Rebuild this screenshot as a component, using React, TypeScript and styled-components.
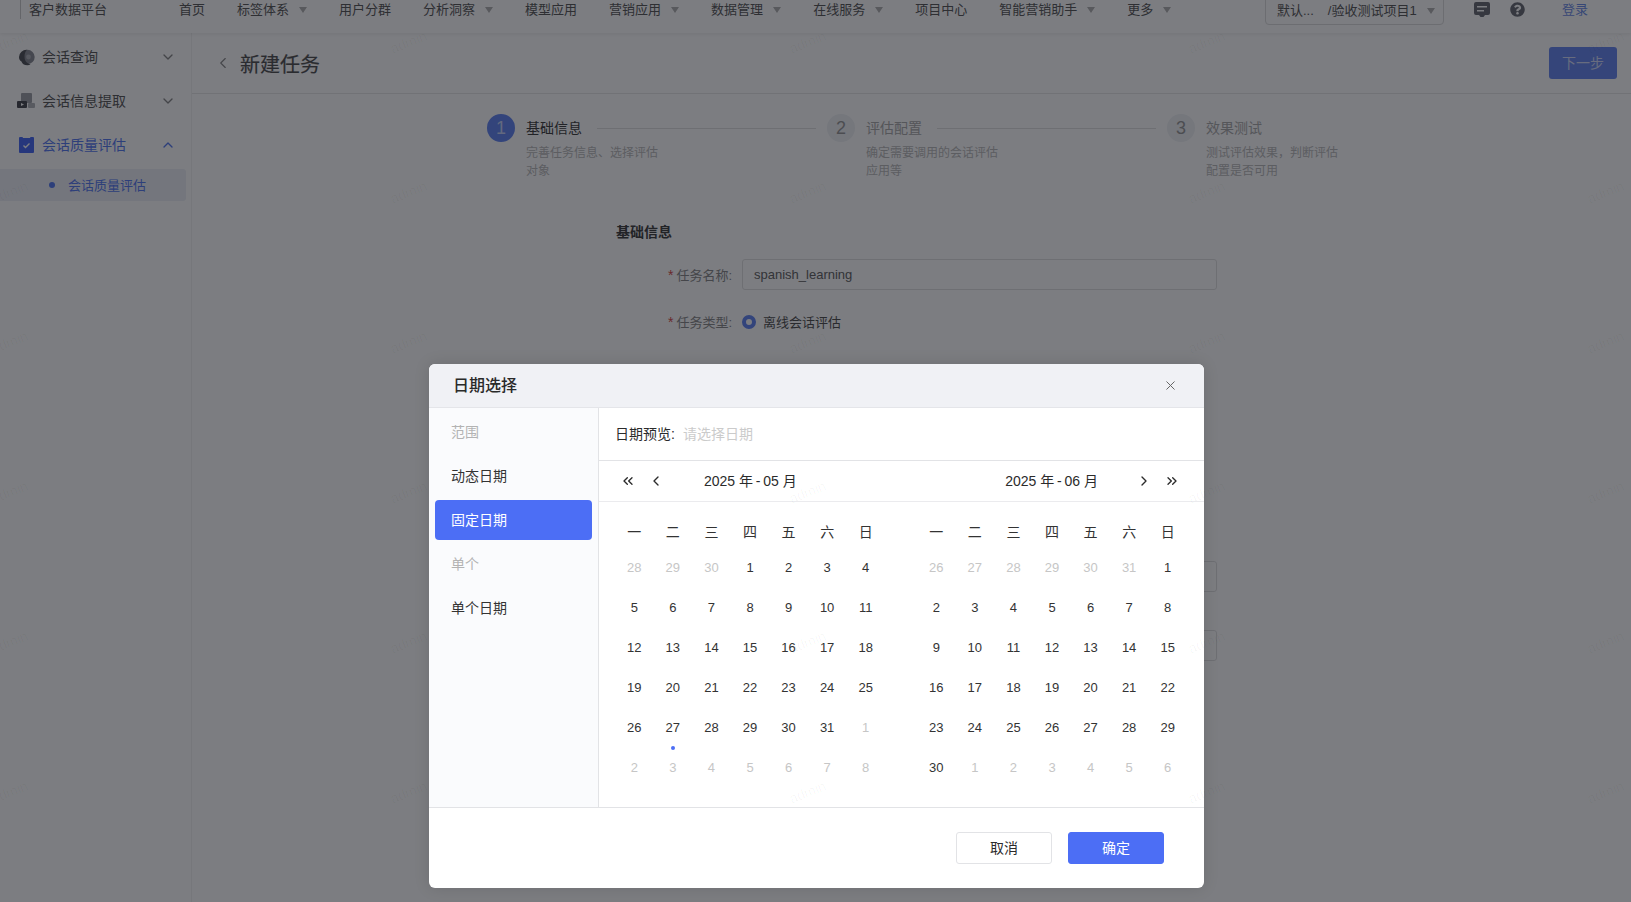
import React from "react";
import styled, { createGlobalStyle } from "styled-components";
import { ChevronDown, ChevronUp, ChevronLeft, ChevronRight, ChevronsLeft, ChevronsRight, X } from "lucide-react";
import { FaQuestionCircle } from "react-icons/fa";

const Global = createGlobalStyle`
  html, body { margin: 0; padding: 0; background: #fff; }
  body { font-family: "Liberation Sans", "Noto Sans CJK SC", sans-serif; color: #555; overflow: hidden; }
  * { box-sizing: border-box; }
`;

const Root = styled.div`
  position: relative;
  width: 1631px;
  height: 902px;
  overflow: hidden;
  background: #fff;
`;

const TopNav = styled.header`
  display: flex;
  align-items: flex-start;
  height: 33px;
  padding: 0 43px 0 20px;
  font-size: 13px;
  line-height: 19px;
  color: #5c5c5c;
  box-shadow: 0 1px 4px rgba(0, 0, 0, 0.08);
  position: relative;
`;
const Brand = styled.div`
  border-left: 1px solid #ccc;
  padding-left: 8px;
  height: 19px;
  margin-right: 72px;
  white-space: nowrap;
`;
const NavList = styled.nav`
  display: flex;
  gap: 32px;
`;
const NavItem = styled.span`
  display: flex;
  align-items: center;
  white-space: nowrap;
`;
const Caret = styled.i`
  width: 0;
  height: 0;
  margin-left: 10px;
  border-left: 4px solid transparent;
  border-right: 4px solid transparent;
  border-top: 6px solid #b4b4b4;
`;
const NavRight = styled.div`
  margin-left: auto;
  display: flex;
  align-items: flex-start;
`;
const ProjectSelect = styled.div`
  width: 179px;
  height: 33px;
  margin-top: -8px;
  padding: 4px 12px 0 11px;
  border: 1px solid #ddd;
  border-radius: 4px;
  display: flex;
  align-items: center;
  justify-content: space-between;
  white-space: pre;
`;
const SelectGap = styled.span`
  display: inline-block;
  width: 14px;
`;
const IconBtn = styled.span`
  display: flex;
  color: #6d7078;
  margin-top: 2px;
`;
const MsgIcon = styled(IconBtn)`
  margin-left: 30px;
`;
const HelpIcon = styled(IconBtn)`
  margin-left: 20px;
`;
const Login = styled.span`
  margin-left: 37px;
  color: #6f8fe8;
  font-size: 13px;
`;

const Body = styled.div`
  display: flex;
  height: 869px;
`;
const Side = styled.aside`
  width: 192px;
  flex: none;
  padding-top: 2px;
  border-right: 1px solid #f2f2f2;
  font-size: 14px;
`;
const SideItem = styled.div<{ $active?: boolean }>`
  display: flex;
  align-items: center;
  height: 44px;
  padding: 0 15px 0 17px;
  color: ${(p) => (p.$active ? "#5b7df0" : "#5c5c5c")};
  > svg:last-child { margin-left: auto; color: ${(p) => (p.$active ? "#5b7df0" : "#8a8a8a")}; }
`;
const SideIcon = styled.span`
  width: 18px;
  height: 18px;
  margin-right: 7px;
  display: flex;
  align-items: center;
  justify-content: center;
`;
const SideLabel = styled.span`
  padding-bottom: 2px;
`;
const SubItem = styled.div`
  width: 186px;
  height: 32px;
  margin-top: 2px;
  padding-left: 49px;
  display: flex;
  align-items: center;
  gap: 13px;
  font-size: 13px;
  color: #5b7df0;
  background: #eef1f6;
  border-radius: 0 3px 3px 0;
`;
const Bullet = styled.i`
  width: 6px;
  height: 6px;
  border-radius: 50%;
  background: #5b7df0;
`;

const Main = styled.main`
  flex: 1;
  min-width: 0;
`;
const PageHead = styled.div`
  height: 61px;
  display: flex;
  align-items: center;
  padding: 0 14px 0 22px;
  border-bottom: 1px solid #e9e9e9;
  color: #8c8c8c;
`;
const PageTitle = styled.h1`
  margin: 0 0 0 8px;
  font-size: 20px;
  font-weight: 400;
  color: #555;
  -webkit-text-stroke: 0.2px #555;
`;
const NextBtn = styled.button`
  margin-left: auto;
  width: 68px;
  height: 32px;
  padding: 0 0 2px;
  font: inherit;
  font-size: 14px;
  color: #d3dcfa;
  background: #6c8bf0;
  border: 0;
  border-radius: 3px;
`;

const Stepper = styled.div`
  display: flex;
  margin: 20px 0 0 295px;
`;
const Step = styled.div`
  width: 340px;
  flex: none;
  display: flex;
  padding-right: 11px;
`;
const StepNum = styled.div<{ $on?: boolean }>`
  width: 28px;
  height: 28px;
  flex: none;
  border-radius: 50%;
  display: flex;
  align-items: center;
  justify-content: center;
  font-size: 18px;
  margin-right: 11px;
  color: ${(p) => (p.$on ? "#c8d4fb" : "#9c9c9c")};
  background: ${(p) => (p.$on ? "#6688f2" : "#f0f2f5")};
`;
const StepBody = styled.div`
  flex: 1;
  min-width: 0;
`;
const StepHead = styled.div<{ $on?: boolean }>`
  height: 28px;
  display: flex;
  align-items: center;
  font-size: 14px;
  white-space: nowrap;
  color: ${(p) => (p.$on ? "#444" : "#adadad")};
`;
const StepTitle = styled.span`
  padding-bottom: 2px;
`;
const StepLine = styled.i`
  flex: 1;
  height: 1px;
  margin-left: 15px;
  background: #e2e2e2;
`;
const StepDesc = styled.div`
  width: 135px;
  margin-top: 2px;
  font-size: 12px;
  line-height: 18px;
  color: #bcbcbc;
`;

const Form = styled.section`
  margin: 42px 0 0 424px;
`;
const FormTitle = styled.h2`
  margin: 0;
  font-size: 14px;
  font-weight: 700;
  line-height: 20px;
  color: #444;
`;
const Row = styled.div<{ $gap: number }>`
  display: flex;
  align-items: center;
  margin-top: ${(p) => p.$gap}px;
  font-size: 13px;
`;
const Label = styled.label`
  width: 116px;
  flex: none;
  margin-right: 10px;
  text-align: right;
  color: #8c8c8c;
  &::before {
    content: "*";
    font-size: 14px;
    color: #d9534f;
    margin-right: 3px;
  }
`;
const Field = styled.div`
  width: 475px;
  height: 31px;
  padding-left: 11px;
  border: 1px solid #e2e2e2;
  border-radius: 3px;
  line-height: 29px;
  color: #666;
`;
const Radio = styled.i`
  width: 14px;
  height: 14px;
  margin-right: 7px;
  border-radius: 50%;
  border: 4px solid #6688f2;
  background: #fff;
`;

const Overlay = styled.div`
  position: absolute;
  inset: 0;
  background: rgba(3, 5, 13, 0.52);
`;
const Modal = styled.div`
  position: absolute;
  left: 429px;
  top: 364px;
  width: 775px;
  height: 524px;
  display: flex;
  flex-direction: column;
  background: #fff;
  border-radius: 6px;
  overflow: hidden;
  box-shadow: 0 0 16px rgba(0, 0, 0, 0.12);
  color: #2b2b2b;
`;
const ModalHead = styled.div`
  height: 44px;
  flex: none;
  display: flex;
  align-items: center;
  justify-content: space-between;
  padding: 0 26px 0 24px;
  background: #f0f1f5;
  border-bottom: 1px solid #e4e5e9;
  font-size: 16px;
  font-weight: 500;
  color: #2a2a2a;
  > svg { color: #666; }
`;
const ModalTitle = styled.span`
  padding-bottom: 4px;
`;
const ModalBody = styled.div`
  flex: 1;
  display: flex;
  min-height: 0;
`;
const Menu = styled.div`
  width: 170px;
  flex: none;
  display: flex;
  flex-direction: column;
  padding: 2px 6px 0;
  background: #fafbfd;
  border-right: 1px solid #e2e3e6;
`;
const MenuGroup = styled.div`
  height: 44px;
  flex: none;
  padding: 0 16px 2px;
  display: flex;
  align-items: center;
  font-size: 14px;
  color: #b3b3b3;
`;
const MenuItem = styled.div<{ $active?: boolean }>`
  height: 40px;
  flex: none;
  margin: 2px 0;
  padding: 0 16px 2px;
  display: flex;
  align-items: center;
  font-size: 14px;
  border-radius: 4px;
  color: ${(p) => (p.$active ? "#fff" : "#333")};
  background: ${(p) => (p.$active ? "#4c6ef5" : "transparent")};
`;
const CalPane = styled.div`
  flex: 1;
  min-width: 0;
  display: flex;
  flex-direction: column;
`;
const Preview = styled.div`
  height: 53px;
  flex: none;
  display: flex;
  align-items: center;
  padding: 0 0 2px 16px;
  font-size: 14px;
  border-bottom: 1px solid #e2e3e6;
`;
const Placeholder = styled.span`
  margin-left: 8px;
  color: #cbcbcb;
`;
const CalBar = styled.div`
  height: 41px;
  flex: none;
  display: flex;
  align-items: center;
  font-size: 14px;
  border-bottom: 1px solid #ebebee;
`;
const BarIcon = styled.span<{ $edge?: "left" | "right" }>`
  width: 28px;
  flex: none;
  display: flex;
  justify-content: center;
  color: #2b2b2b;
  margin-left: ${(p) => (p.$edge === "left" ? "15px" : "0")};
  margin-right: ${(p) => (p.$edge === "right" ? "18px" : "0")};
`;
const LeftTitle = styled.span`
  margin-left: 34px;
  padding-bottom: 2px;
  white-space: pre;
`;
const RightTitle = styled.span`
  margin-left: auto;
  margin-right: 32px;
  padding-bottom: 2px;
  white-space: pre;
`;
const Calendars = styled.div`
  display: flex;
  gap: 32px;
  padding: 15px 0 0 16px;
`;
const Grid = styled.div`
  width: 270px;
  display: grid;
  grid-template-columns: repeat(7, 1fr);
  grid-template-rows: 30px;
  grid-auto-rows: 40px;
  align-content: start;
`;
const WeekHead = styled.div`
  display: flex;
  align-items: center;
  justify-content: center;
  padding-bottom: 2px;
  font-size: 14px;
  color: #333;
`;
const Day = styled.div<{ $off?: boolean }>`
  position: relative;
  display: flex;
  align-items: center;
  justify-content: center;
  font-size: 13px;
  color: ${(p) => (p.$off ? "#c6c6c6" : "#333")};
`;
const Today = styled.i`
  position: absolute;
  left: 50%;
  top: 39px;
  width: 4px;
  height: 4px;
  margin-left: -2px;
  border-radius: 50%;
  background: #4c6ef5;
`;
const ModalFoot = styled.div`
  height: 81px;
  flex: none;
  display: flex;
  justify-content: flex-end;
  gap: 16px;
  padding: 24px 40px 0 0;
  border-top: 1px solid #e2e3e6;
`;
const FootBtn = styled.button<{ $primary?: boolean }>`
  width: 96px;
  height: 32px;
  padding: 0 0 2px;
  font: inherit;
  font-size: 14px;
  border-radius: 3px;
  border: 1px solid ${(p) => (p.$primary ? "#4c6ef5" : "#e2e3e6")};
  background: ${(p) => (p.$primary ? "#4c6ef5" : "#fff")};
  color: ${(p) => (p.$primary ? "#fff" : "#2b2b2b")};
`;

const Watermarks = styled.div`
  position: absolute;
  left: -190px;
  top: -33px;
  display: grid;
  grid-template-columns: repeat(5, 399px);
  grid-auto-rows: 150px;
  pointer-events: none;
`;
const Mark = styled.span`
  display: flex;
  align-items: center;
  justify-content: center;
  font-size: 14px;
  color: rgba(0, 0, 0, 0.035);
  transform: rotate(-22deg);
`;

const navItems: [string, boolean][] = [
  ["首页", false], ["标签体系", true], ["用户分群", false], ["分析洞察", true], ["模型应用", false],
  ["营销应用", true], ["数据管理", true], ["在线服务", true], ["项目中心", false], ["智能营销助手", true], ["更多", true],
];
const weekDays = ["一", "二", "三", "四", "五", "六", "日"];

type Cell = { n: number; off?: boolean; today?: boolean };
const seq = (from: number, to: number, off = false): Cell[] =>
  Array.from({ length: to - from + 1 }, (_, i) => ({ n: from + i, off }));
const may: Cell[] = [...seq(28, 30, true), ...seq(1, 31), ...seq(1, 8, true)].map((c, i) =>
  i === 29 ? { ...c, today: true } : c,
);
const june: Cell[] = [...seq(26, 31, true), ...seq(1, 30), ...seq(1, 6, true)];

const steps = [
  { n: 1, t: "基础信息", d: "完善任务信息、选择评估对象", on: true, line: true },
  { n: 2, t: "评估配置", d: "确定需要调用的会话评估应用等", on: false, line: true },
  { n: 3, t: "效果测试", d: "测试评估效果，判断评估配置是否可用", on: false, line: false },
];

const Month = ({ cells }: { cells: Cell[] }) => (
  <Grid>
    {weekDays.map((w) => (
      <WeekHead key={w}>{w}</WeekHead>
    ))}
    {cells.map((c, i) => (
      <Day key={i} $off={c.off}>
        {c.n}
        {c.today && <Today />}
      </Day>
    ))}
  </Grid>
);

export default function App() {
  return (
    <Root>
      <Global />
      <TopNav>
        <Brand>客户数据平台</Brand>
        <NavList>
          {navItems.map(([label, caret]) => (
            <NavItem key={label}>
              {label}
              {caret && <Caret />}
            </NavItem>
          ))}
        </NavList>
        <NavRight>
          <ProjectSelect>
            <span>
              默认...
              <SelectGap />
              /验收测试项目1
            </span>
            <Caret />
          </ProjectSelect>
          <MsgIcon>
            <svg width="16" height="15" viewBox="0 0 16 15">
              <path fill="currentColor" d="M2 0h12a2 2 0 0 1 2 2v9a2 2 0 0 1-2 2h-3l-1.5 2h-3L5 13H2a2 2 0 0 1-2-2V2a2 2 0 0 1 2-2z" />
              <path fill="#fff" d="M3 4h10v1.5H3zM3 8h7v1.5H3z" />
            </svg>
          </MsgIcon>
          <HelpIcon>
            <FaQuestionCircle size={15} />
          </HelpIcon>
          <Login>登录</Login>
        </NavRight>
      </TopNav>
      <Body>
        <Side>
          <SideItem>
            <SideIcon>
              <svg width="17" height="17" viewBox="0 0 17 17">
                <circle cx="9.5" cy="8" r="7.2" fill="#8d8f96" />
                <path fill="#55575c" d="M9 .8A7.5 7.5 0 0 0 1 8c0 2 .8 3.5 2.5 4.6.6 2.4 2.5 3.6 6 3.6 1.2 0 2.3-.2 3-.6-3-1-6-3-6-8 0-3 1-5.5 2.500-6.800z" />
                <circle cx="10.5" cy="8" r="2.4" fill="#b0b2b8" />
              </svg>
            </SideIcon>
            <SideLabel>会话查询</SideLabel>
            <ChevronDown size={16} />
          </SideItem>
          <SideItem>
            <SideIcon>
              <svg width="18" height="16" viewBox="0 0 18 16">
                <rect x="4" y="0" width="11" height="10" rx="1" fill="#a2a4aa" />
                <rect x="0" y="8" width="10" height="7" rx="1" fill="#4c4e54" />
                <path d="M4 10l3 1.500L4 13z" fill="#fff" />
                <rect x="11" y="10" width="7" height="5" rx="1" fill="#b4b6bb" />
              </svg>
            </SideIcon>
            <SideLabel>会话信息提取</SideLabel>
            <ChevronDown size={16} />
          </SideItem>
          <SideItem $active>
            <SideIcon>
              <svg width="15" height="16" viewBox="0 0 15 16">
                <path d="M1 0h2.500l.5 1h7l.5-1H14a1 1 0 0 1 1 1v14a1 1 0 0 1-1 1H1a1 1 0 0 1-1-1V1a1 1 0 0 1 1-1z" fill="#4c6ef5" />
                <path d="M4.500 8.500l2 2 4-4" stroke="#fff" strokeWidth="1.4" fill="none" />
              </svg>
            </SideIcon>
            <SideLabel>会话质量评估</SideLabel>
            <ChevronUp size={16} />
          </SideItem>
          <SubItem>
            <Bullet />
            <SideLabel>会话质量评估</SideLabel>
          </SubItem>
        </Side>
        <Main>
          <PageHead>
            <ChevronLeft size={18} strokeWidth={1.5} />
            <PageTitle>新建任务</PageTitle>
            <NextBtn>下一步</NextBtn>
          </PageHead>
          <Stepper>
            {steps.map((s) => (
              <Step key={s.n}>
                <StepNum $on={s.on}>{s.n}</StepNum>
                <StepBody>
                  <StepHead $on={s.on}>
                    <StepTitle>{s.t}</StepTitle>
                    {s.line && <StepLine />}
                  </StepHead>
                  <StepDesc>{s.d}</StepDesc>
                </StepBody>
              </Step>
            ))}
          </Stepper>
          <Form>
            <FormTitle>基础信息</FormTitle>
            <Row $gap={17}>
              <Label>任务名称:</Label>
              <Field>spanish_learning</Field>
            </Row>
            <Row $gap={22}>
              <Label>任务类型:</Label>
              <Radio />
              离线会话评估
            </Row>
            <Row $gap={230}>
              <Label>任务时间:</Label>
              <Field />
            </Row>
            <Row $gap={38}>
              <Label>评估对象:</Label>
              <Field />
            </Row>
          </Form>
        </Main>
      </Body>
      <Overlay />
      <Modal>
        <ModalHead>
          <ModalTitle>日期选择</ModalTitle>
          <X size={15} strokeWidth={1.6} />
        </ModalHead>
        <ModalBody>
          <Menu>
            <MenuGroup>范围</MenuGroup>
            <MenuItem>动态日期</MenuItem>
            <MenuItem $active>固定日期</MenuItem>
            <MenuGroup>单个</MenuGroup>
            <MenuItem>单个日期</MenuItem>
          </Menu>
          <CalPane>
            <Preview>
              日期预览:
              <Placeholder>请选择日期</Placeholder>
            </Preview>
            <CalBar>
              <BarIcon $edge="left">
                <ChevronsLeft size={16} />
              </BarIcon>
              <BarIcon>
                <ChevronLeft size={16} />
              </BarIcon>
              <LeftTitle>{"2025 年\u2009-\u200905 月"}</LeftTitle>
              <RightTitle>{"2025 年\u2009-\u200906 月"}</RightTitle>
              <BarIcon>
                <ChevronRight size={16} />
              </BarIcon>
              <BarIcon $edge="right">
                <ChevronsRight size={16} />
              </BarIcon>
            </CalBar>
            <Calendars>
              <Month cells={may} />
              <Month cells={june} />
            </Calendars>
          </CalPane>
        </ModalBody>
        <ModalFoot>
          <FootBtn>取消</FootBtn>
          <FootBtn $primary>确定</FootBtn>
        </ModalFoot>
      </Modal>
      <Watermarks>
        {Array.from({ length: 35 }, (_, i) => (
          <Mark key={i}>admin</Mark>
        ))}
      </Watermarks>
    </Root>
  );
}
